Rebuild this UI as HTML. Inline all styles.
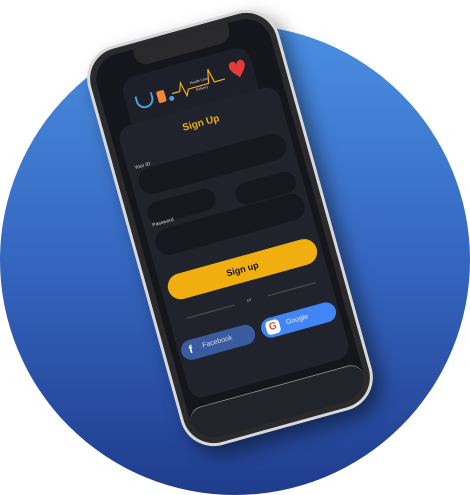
<!DOCTYPE html>
<html><head><meta charset="utf-8"><style>
*{margin:0;padding:0;box-sizing:border-box}
body{width:470px;height:491px;background:#fff;position:relative;overflow:hidden;font-family:"Liberation Sans",sans-serif}
.circle{position:absolute;left:0px;top:25px;width:470px;height:470px;border-radius:50%;background:linear-gradient(180deg,#4a8fe2 0%,#3566c0 50%,#1f3c8c 100%)}
.phone{position:absolute;left:131px;top:21px;width:198px;height:414px;transform:rotate(-15.5deg);border-radius:34px;background:#d8d8da;padding:3px;box-shadow:6px 10px 18px rgba(0,0,0,.45)}
.body{width:100%;height:100%;border-radius:31px;background:#2a2a2c;padding:6px;position:relative}
.screen{width:100%;height:100%;border-radius:26px;background:#15161c;position:relative;overflow:hidden}
.notch{position:absolute;left:44px;top:0;width:98px;height:18px;background:#2a2a2c;border-radius:0 0 12px 12px}
.abs{position:absolute}
.card{background:#20232b;border-radius:14px}
.pill{background:#16181f;border-radius:14px}
.lbl{color:#ddd;font-size:5px}
</style></head><body>
<div class="circle"></div>
<div class="phone"><div class="body"><div class="screen">
 <div class="notch"></div>
 <div class="abs card" style="left:23px;top:26px;width:132px;height:80px;background:#1d2028"></div>
 <div class="abs" style="left:33px;top:46px;width:18px;height:14px;border:2px solid #4aa3df;border-top:none;border-radius:0 0 10px 10px"></div>
 <div class="abs" style="left:55px;top:47px;width:8px;height:12px;background:#f08a3a;border-radius:2px"></div>
 <div class="abs" style="left:66px;top:55px;width:5px;height:5px;background:#4aa3df;border-radius:50%"></div>
 <svg class="abs" style="left:70px;top:35px" width="80" height="25"><polyline points="0,18 8,18 11,10 14,24 17,18 38,18 41,4 44,18 55,18" fill="none" stroke="#f0ae0f" stroke-width="1.2"/><text x="20" y="14" font-size="3.5" fill="#ddd">Health Care</text><text x="24" y="22" font-size="3.5" fill="#ddd">Delivery</text><path d="M62,8 c0,-6 8,-6 8,0 c0,-6 8,-6 8,0 c0,6 -8,11 -8,13 c0,-2 -8,-7 -8,-13z" fill="#e53a3a"/></svg>
 <div class="abs card" style="left:7px;top:72px;width:166px;height:282px"></div>
 <div class="abs" style="left:0;top:84px;width:100%;text-align:center;color:#f0ae0f;font-weight:bold;font-size:10px">Sign Up</div>
 <div class="abs pill" style="left:14px;top:118px;width:152px;height:27px"></div>
 <div class="abs lbl" style="left:14px;top:112px">Your ID</div>
 <div class="abs pill" style="left:14px;top:153px;width:70px;height:22px"></div>
 <div class="abs pill" style="left:104px;top:158px;width:62px;height:22px"></div>
 <div class="abs lbl" style="left:16px;top:172px">Password</div>
 <div class="abs pill" style="left:14px;top:181px;width:154px;height:27px"></div>
 <div class="abs" style="left:14px;top:228px;width:154px;height:26px;background:#f0ae0f;border-radius:13px;text-align:center;line-height:26px;font-weight:bold;font-size:9px;color:#111">Sign up</div>
 <div class="abs" style="left:24px;top:273px;width:50px;height:1px;background:#555"></div>
 <div class="abs" style="left:108px;top:273px;width:50px;height:1px;background:#555"></div>
 <div class="abs lbl" style="left:87px;top:270px;color:#aaa">or</div>
 <div class="abs" style="left:10px;top:295px;width:76px;height:20px;background:#3a5ba0;border-radius:10px;color:#ddd;font-size:7px;line-height:20px;padding-left:22px"><span style="position:absolute;left:8px;font-weight:bold;font-size:11px;color:#fff">f</span>Facebook</div>
 <div class="abs" style="left:93px;top:295px;width:77px;height:20px;background:#4285f4;border-radius:10px;color:#eee;font-size:7px;line-height:20px;padding-left:26px"><span style="position:absolute;left:5px;top:3px;width:14px;height:14px;background:#fff;border-radius:4px;text-align:center;line-height:14px;font-weight:bold;font-size:10px;color:#ea4335">G</span>Google</div>
 <div class="abs" style="left:0;top:362px;width:100%;height:40px;background:#22242b;border-radius:14px 14px 0 0;border-top:1px solid #888"></div>
</div></div></div>
</body></html>
